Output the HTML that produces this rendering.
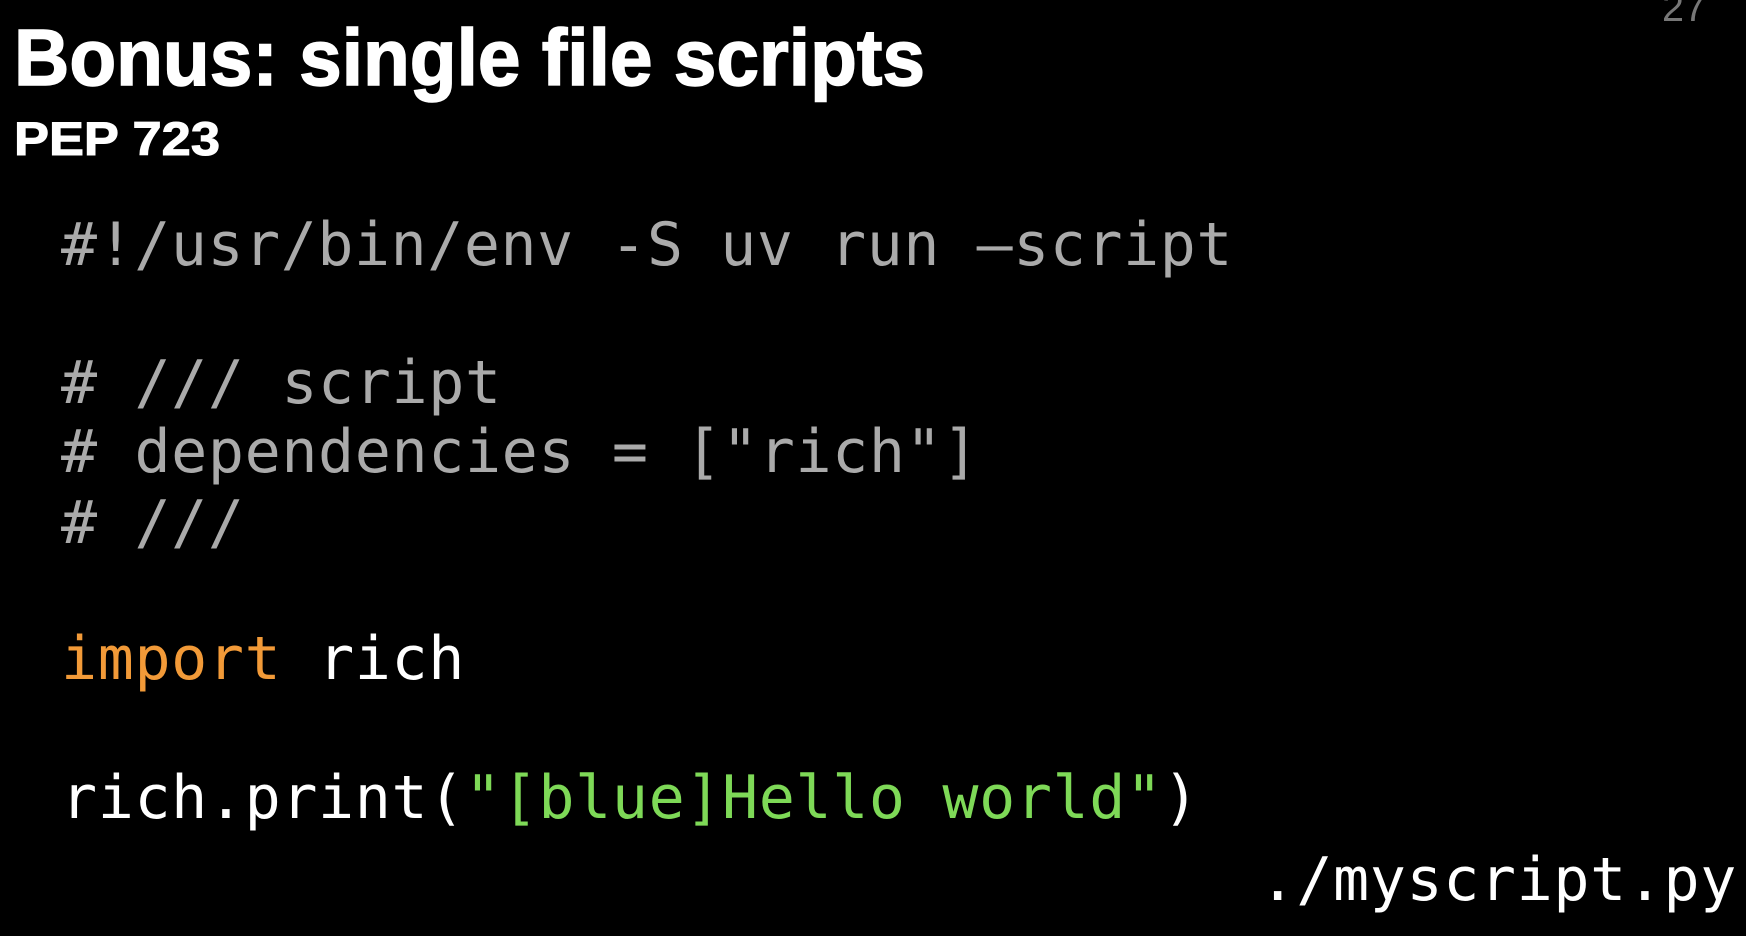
<!DOCTYPE html>
<html><head><meta charset="utf-8"><style>
html,body{margin:0;padding:0;background:#000;width:1746px;height:936px;overflow:hidden}
svg{display:block}
.m{font-family:"DejaVu Sans Mono","Liberation Mono",monospace;font-size:60px;letter-spacing:0.6px}
</style></head><body>
<svg width="1746" height="936" xmlns="http://www.w3.org/2000/svg">
<rect width="1746" height="936" fill="#000"/>
<text x="1662" y="21" fill="#777" font-family="Liberation Sans, sans-serif" font-size="40" textLength="44" lengthAdjust="spacingAndGlyphs">27</text>
<text x="14" y="85" fill="#fff" font-family="Liberation Sans, sans-serif" font-weight="bold" font-size="80" stroke="#fff" stroke-width="1.5" textLength="911" lengthAdjust="spacingAndGlyphs">Bonus: single file scripts</text>
<text x="14" y="155" fill="#fff" font-family="Liberation Sans, sans-serif" font-weight="bold" font-size="47" stroke="#fff" stroke-width="1" textLength="206" lengthAdjust="spacingAndGlyphs">PEP 723</text>
<g class="m" xml:space="preserve">
<text x="61" y="265" fill="#aaa" textLength="1172" lengthAdjust="spacingAndGlyphs">#!/usr/bin/env -S uv run —script</text>
<text x="61" y="403" fill="#aaa"># /// script</text>
<text x="61" y="472" fill="#aaa"># dependencies = ["rich"]</text>
<text x="61" y="543" fill="#aaa"># ///</text>
<text x="61" y="679"><tspan fill="#f29a38">import</tspan><tspan fill="#fff"> rich</tspan></text>
<text x="61" y="818"><tspan fill="#fff">rich.print(</tspan><tspan fill="#7ed957">"[blue]Hello world"</tspan><tspan fill="#fff">)</tspan></text>
<text x="1737" y="900" fill="#fff" text-anchor="end">./myscript.py</text>
</g>
</svg>
</body></html>
